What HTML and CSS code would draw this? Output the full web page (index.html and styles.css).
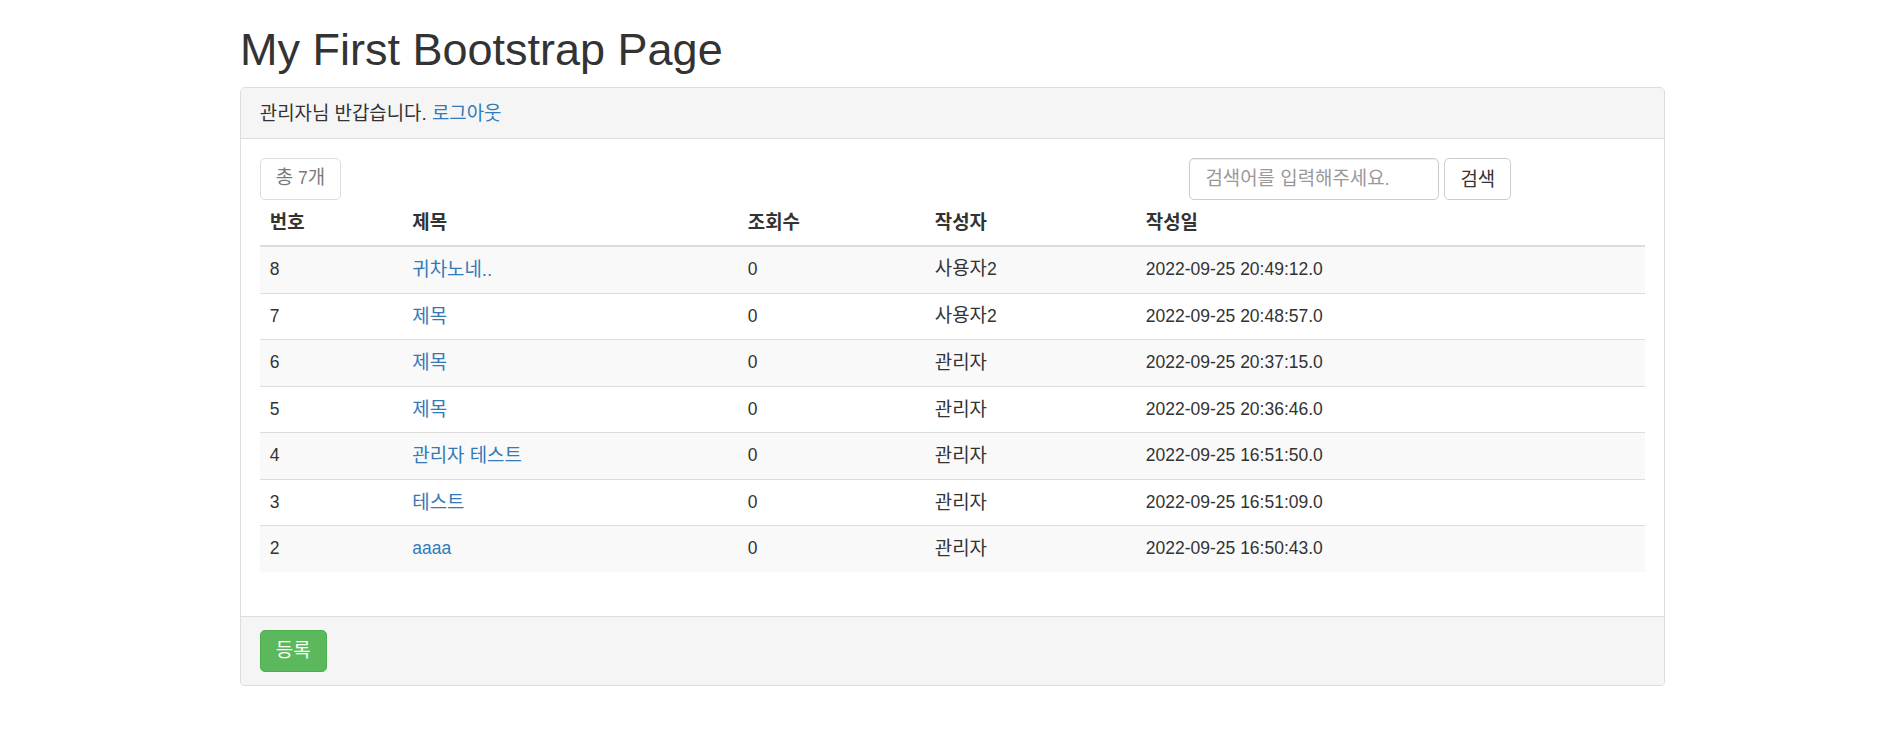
FILE: index.html
```html
<!DOCTYPE html>
<html lang="ko">
<head>
<meta charset="utf-8">
<title>My First Bootstrap Page</title>
<link rel="stylesheet" href="styles.css">
</head>
<body>
<div class="container">
  <h1 class="page-title">My First Bootstrap Page</h1>
  <div class="panel">
    <div class="panel-heading ko">관리자님 반갑습니다. <a href="#">로그아웃</a></div>
    <div class="panel-body">
      <div class="toolbar">
        <span class="btn btn-default is-disabled"><span class="ko">총</span> 7<span class="ko">개</span></span>
        <form class="search-form">
          <input type="text" class="form-control" placeholder="검색어를 입력해주세요.">
          <button type="button" class="btn btn-default ko">검색</button>
        </form>
      </div>
      <table class="board">
        <colgroup>
          <col class="col-no">
          <col class="col-title">
          <col class="col-views">
          <col class="col-author">
          <col class="col-date">
        </colgroup>
        <thead>
          <tr><th>번호</th><th>제목</th><th>조회수</th><th>작성자</th><th>작성일</th></tr>
        </thead>
        <tbody>
          <tr><td>8</td><td class="ko"><a href="#">귀차노네..</a></td><td>0</td><td><span class="ko">사용자</span>2</td><td>2022-09-25 20:49:12.0</td></tr>
          <tr><td>7</td><td class="ko"><a href="#">제목</a></td><td>0</td><td><span class="ko">사용자</span>2</td><td>2022-09-25 20:48:57.0</td></tr>
          <tr><td>6</td><td class="ko"><a href="#">제목</a></td><td>0</td><td class="ko">관리자</td><td>2022-09-25 20:37:15.0</td></tr>
          <tr><td>5</td><td class="ko"><a href="#">제목</a></td><td>0</td><td class="ko">관리자</td><td>2022-09-25 20:36:46.0</td></tr>
          <tr><td>4</td><td class="ko"><a href="#">관리자 테스트</a></td><td>0</td><td class="ko">관리자</td><td>2022-09-25 16:51:50.0</td></tr>
          <tr><td>3</td><td class="ko"><a href="#">테스트</a></td><td>0</td><td class="ko">관리자</td><td>2022-09-25 16:51:09.0</td></tr>
          <tr><td>2</td><td><a href="#">aaaa</a></td><td>0</td><td class="ko">관리자</td><td>2022-09-25 16:50:43.0</td></tr>
        </tbody>
      </table>
    </div>
    <div class="panel-footer">
      <button type="button" class="btn btn-success ko">등록</button>
    </div>
  </div>
</div>
</body>
</html>
```

FILE: styles.css
```css
* {
  box-sizing: border-box;
}

html, body {
  margin: 0;
  padding: 0;
  background: #fff;
}

body {
  font-family: "Liberation Sans", "Noto Sans CJK KR", sans-serif;
  font-size: 17.5px;
  line-height: 25px;
  color: #333;
}

a {
  color: #337ab7;
  text-decoration: none;
}

/* Hangul runs: slightly larger, to match the wider Korean UI face */
.ko {
  font-size: 18.9px;
}

span.ko {
  line-height: 1;
}

.container {
  width: 1425px;
  margin-left: 240px;
}

.page-title {
  margin: 25px 0 12.5px;
  font-size: 45px;
  font-weight: 500;
  line-height: 49.5px;
  color: #333;
}

.panel {
  border: 1px solid #ddd;
  border-radius: 5px;
  background: #fff;
  box-shadow: 0 1px 1px rgba(0, 0, 0, 0.05);
}

.panel-heading {
  padding: 12.5px 18.75px;
  background: #f5f5f5;
  border-bottom: 1px solid #ddd;
  border-radius: 4px 4px 0 0;
}

.panel-body {
  padding: 18.75px;
}

.panel-footer {
  padding: 13px 18.75px;
  background: #f5f5f5;
  border-top: 1px solid #ddd;
  border-radius: 0 0 4px 4px;
  line-height: 0;
}

.toolbar {
  display: flex;
  justify-content: space-between;
  align-items: flex-start;
}

.search-form {
  display: flex;
  gap: 5px;
  margin: 0 134px 0 0;
}

.btn {
  display: inline-block;
  height: 42.5px;
  padding: 7.5px 15px;
  font-family: inherit;
  font-size: 17.5px;
  line-height: 25px;
  border: 1px solid transparent;
  border-radius: 5px;
  text-align: center;
  white-space: nowrap;
  cursor: pointer;
}

.btn.ko {
  font-size: 18.9px;
}

.btn-default {
  color: #333;
  background: #fff;
  border-color: #ccc;
}

.is-disabled {
  opacity: 0.65;
  cursor: not-allowed;
}

.btn-success {
  color: #fff;
  background: #5cb85c;
  border-color: #4cae4c;
}

.form-control {
  width: 250px;
  height: 42.5px;
  padding: 7.5px 15px;
  font-family: inherit;
  font-size: 18.9px;
  line-height: 25px;
  color: #555;
  background: #fff;
  border: 1px solid #ccc;
  border-radius: 5px;
  box-shadow: inset 0 1px 1px rgba(0, 0, 0, 0.075);
}

.form-control::placeholder {
  color: #999;
}

.board {
  width: 100%;
  margin-bottom: 25px;
  border-collapse: collapse;
  border-spacing: 0;
  table-layout: fixed;
}

.col-no { width: 142.5px; }
.col-title { width: 335.5px; }
.col-views { width: 187px; }
.col-author { width: 211px; }

.board th {
  padding: 10px;
  text-align: left;
  font-size: 18.9px;
  font-weight: bold;
  line-height: 25px;
  border-bottom: 2px solid #ddd;
}

.board td {
  padding: 10px 10px 10.5px;
  line-height: 25px;
  border-top: 1px solid #ddd;
  vertical-align: middle;
}

.board tbody tr:first-child td {
  border-top: 0;
}

.board tbody tr:nth-child(odd) {
  background: #f9f9f9;
}
```
